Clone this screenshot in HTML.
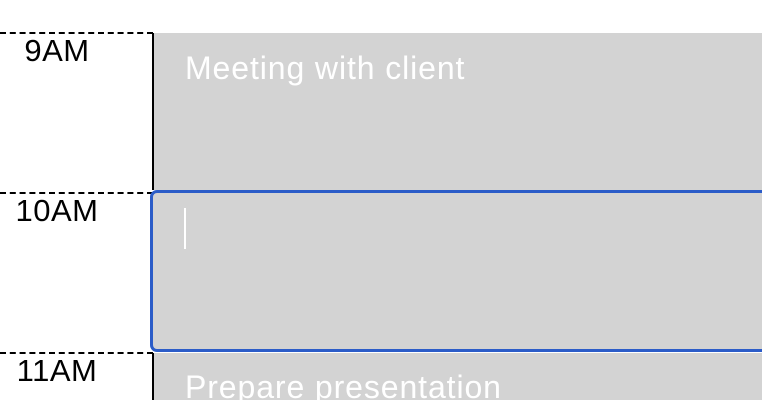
<!DOCTYPE html>
<html><head><style>
body{margin:0;width:762px;height:400px;overflow:hidden;background:#fff;font-family:"Liberation Sans",sans-serif;position:relative}
.d{position:absolute;left:0;width:153px;border-top:2px dashed #000}
.l{position:absolute;width:114px;text-align:center;font-size:31px;letter-spacing:0.5px;color:#000}
.v{position:absolute;left:152px;width:2px;background:#000}
.g{position:absolute;left:154px;right:0;background:#d3d3d3}
.t{position:absolute;left:185px;color:#fff;font-size:32px;letter-spacing:0.9px}
</style></head><body>
<div class="d" style="top:32px"></div>
<div class="d" style="top:192px"></div>
<div class="d" style="top:352px"></div>
<div class="l" style="left:0;top:33px">9AM</div>
<div class="l" style="left:0;top:193px">10AM</div>
<div class="l" style="left:0;top:353px">11AM</div>
<div class="v" style="top:33px;height:157px"></div>
<div class="v" style="top:353px;height:47px"></div>
<div class="g" style="top:33px;height:157px"></div>
<div class="g" style="top:353px;height:47px"></div>
<div style="position:absolute;left:150px;top:190px;width:620px;height:156px;border:3px solid #2b5cc8;border-radius:7px;background:#d3d3d3"></div>
<div style="position:absolute;left:184px;top:208px;width:2px;height:41px;background:#fff"></div>
<div class="t" style="top:50px">Meeting with client</div>
<div class="t" style="top:369px">Prepare presentation</div>
</body></html>
